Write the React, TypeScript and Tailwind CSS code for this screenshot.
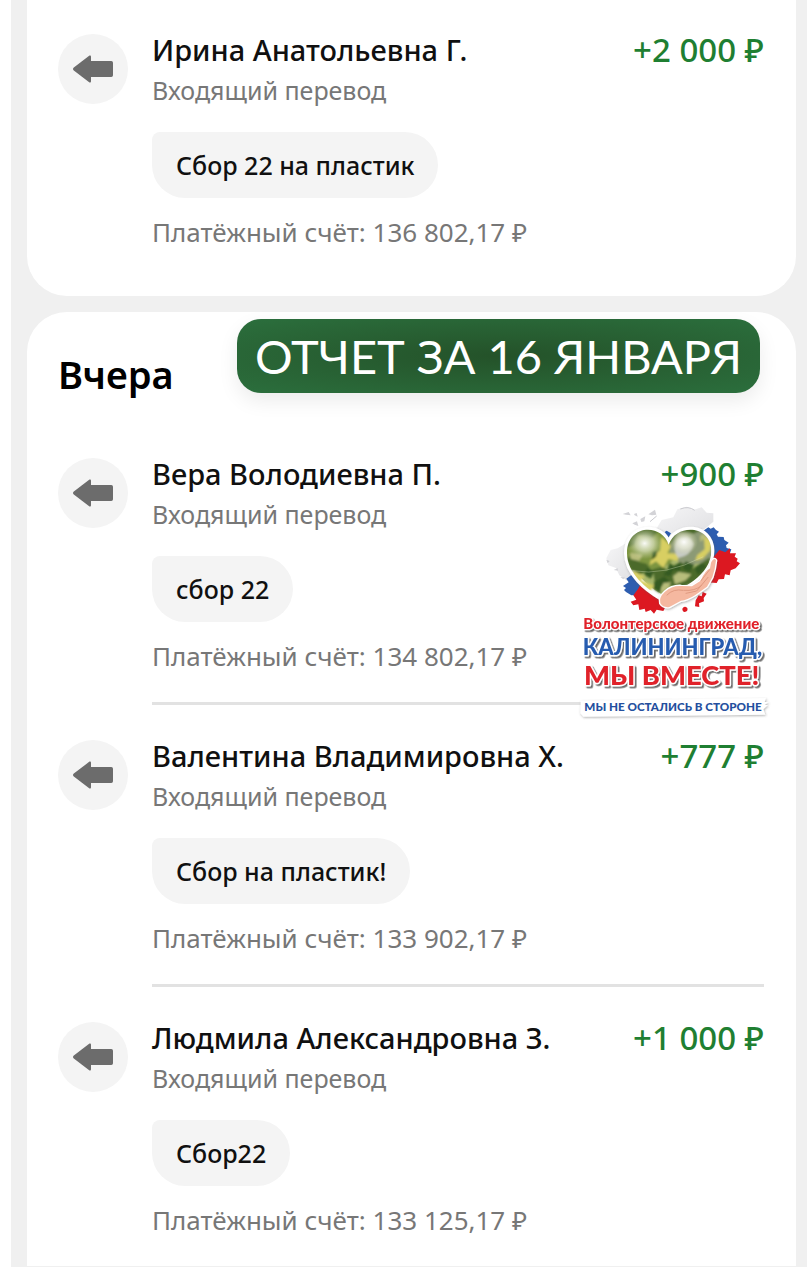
type Transfer = {
  name: string;
  amount: string;
  message: string;
  balance: string;
};

const today: Transfer[] = [
  { name: "Ирина Анатольевна Г.", amount: "+2 000 ₽", message: "Сбор 22 на пластик", balance: "136 802,17 ₽" },
];

const yesterday: Transfer[] = [
  { name: "Вера Володиевна П.", amount: "+900 ₽", message: "сбор 22", balance: "134 802,17 ₽" },
  { name: "Валентина Владимировна Х.", amount: "+777 ₽", message: "Сбор на пластик!", balance: "133 902,17 ₽" },
  { name: "Людмила Александровна З.", amount: "+1 000 ₽", message: "Сбор22", balance: "133 125,17 ₽" },
];

function IncomingIcon() {
  return (
    <span className="mt-1 flex size-[70px] shrink-0 items-center justify-center rounded-full bg-[#f4f4f4]">
      <svg className="h-7 w-10" viewBox="0 0 40 28" fill="#6c6c6c" aria-hidden="true">
        <path d="M16.5 .6Q18 0 18 1.700V6H38.300Q40 6 40 7.700V20.300Q40 22 38.300 22H18V26.300Q18 28 16.500 27.400L.8 15.500Q-.8 14 .8 12.500Z" />
      </svg>
    </span>
  );
}

function TransferRow({ item, divided }: { item: Transfer; divided: boolean }) {
  return (
    <li className="flex gap-6">
      <IncomingIcon />
      <div className="min-w-0 flex-1">
        <div className="flex items-center justify-between gap-4">
          <h3 className="text-[29px] leading-10 font-medium text-[#101010]">{item.name}</h3>
          <span className="text-[33px] leading-10 font-medium whitespace-nowrap text-[#1f7f32]">{item.amount}</span>
        </div>
        <p className="mt-0.5 text-[25px] leading-9 text-[#777777]">Входящий перевод</p>
        <p className="mt-6 w-fit rounded-[33px] rounded-tl-lg bg-[#f4f4f4] px-6 text-[25px] leading-[66px] font-medium text-[#101010]">
          {item.message}
        </p>
        <p className="mt-4 text-[26px] leading-9 text-[#777777]">Платёжный счёт: {item.balance}</p>
        {divided && <hr className="mt-7 mb-[31px] h-[3px] border-0 bg-[#e2e2e2]" />}
      </div>
    </li>
  );
}

function TransferList({ items }: { items: Transfer[] }) {
  return (
    <ul>
      {items.map((item, i) => (
        <TransferRow key={item.name} item={item} divided={i < items.length - 1} />
      ))}
    </ul>
  );
}

function VolunteerLogo() {
  return (
    <svg
      className="absolute top-[188px] right-4 h-[220px] w-[210px]"
      viewBox="0 0 630 660"
      role="img"
      aria-label="Волонтерское движение Калининград, мы вместе!"
    >
      <defs>
        <clipPath id="heart">
          <path d="M296 134C276 70 171 72 171 160C171 220 230 267 273 292C335 270 424 225 424 152C424 75 319 68 296 134Z" />
        </clipPath>
        <radialGradient id="shine">
          <stop offset="0" stopColor="#ffffff" stopOpacity="0.95" />
          <stop offset="0.5" stopColor="#eef0d8" stopOpacity="0.6" />
          <stop offset="1" stopColor="#cdd3a0" stopOpacity="0" />
        </radialGradient>
        <linearGradient id="cloud" x1="0" y1="0" x2="1" y2="1">
          <stop offset="0" stopColor="#f6f6f7" />
          <stop offset="1" stopColor="#dedee1" />
        </linearGradient>
        <filter id="blend">
          <feGaussianBlur stdDeviation="3" />
        </filter>
        <filter id="soft" x="-20%" y="-20%" width="140%" height="140%">
          <feDropShadow dx="2" dy="3" stdDeviation="3" floodColor="#555" floodOpacity="0.45" />
        </filter>
        <filter id="letters" x="-5%" y="-20%" width="110%" height="150%">
          <feDropShadow dx="5" dy="5" stdDeviation="1" floodColor="#444" floodOpacity="0.8" />
        </filter>
      </defs>
      <g fill="url(#cloud)">
        <path d="M258 88L275 60L310 52L322 28L350 20L372 29L395 22L410 38L430 40L430 65L405 86L370 96L330 94L297 120Z" />
        <path d="M168 130L143 145L122 150L109 174L115 196L138 204L148 226L174 244L205 230L190 150Z" />
      </g>
      <path fill="#d3d3d7" d="M158 42L176 36L182 46L168 44ZM192 42L200 39L203 50L194 46ZM187 70L201 64L205 78L194 74ZM211 57L226 49L223 64L214 66ZM235 43L255 29L259 44L246 46ZM131 210L143 205L144 212ZM151 231L165 232L160 238ZM109 179L119 183L113 190Z" />
      <path d="M331 27Q356 17 374 31M240 65L260 48" fill="none" stroke="#c9c9ce" strokeWidth="3" />
      <path fill="#2d5daf" d="M400 92L415 82L422 86L431 82L438 90L447 95L440 103L444 110L461 111L463 120L476 128L468 136L470 144L484 148L477 168L430 175ZM188 222L169 236L176 247L159 258L168 264L162 270L168 276L184 286L205 285L226 265L206 225ZM284 96L296 112L303 100L290 92Z" />
      <path fill="#dc1821" d="M428 174L448 150L466 157L480 145L480 160L498 160L494 170L503 176L500 184L510 190L497 205L482 211L479 226L465 223L462 237L446 238L440 249L412 247ZM204 267L190 286L199 299L182 305L190 316L205 313L208 330L224 326L227 336L242 330L252 341L260 329L280 333L287 320L310 305L273 277L220 238Z" />
      <path fill="#dc1821" d="M377 301L386 286L395 289L398 276L410 281L401 294L402 304L387 310L388 321L375 319ZM337 326Q343 315 352 324Q355 335 344 336Q337 335 337 326Z" />
      <path
        d="M296 134C276 70 171 72 171 160C171 220 230 267 273 292C335 270 424 225 424 152C424 75 319 68 296 134Z"
        fill="#a7b66c"
        stroke="#fff"
        strokeWidth="18"
        filter="url(#soft)"
      />
      <g clipPath="url(#heart)">
        <g filter="url(#blend)">
          <path fill="#7d9540" d="M150 60H310V180L260 220L150 210Z" />
          <path fill="#8c9a74" d="M302 60H440V178L340 200L300 160Z" />
          <path fill="#4c6b2b" d="M180 95L225 80L265 94L246 115L205 105L195 134L165 145ZM165 176L196 163L208 186L230 191L245 212L210 222L184 211ZM299 90Q340 65 390 92L370 101L325 96L304 133ZM248 208L280 199L294 216L330 185L370 205L420 172V230L330 265L255 249Z" />
          <path fill="#d8cf62" d="M274 110L303 139L292 160L330 161L322 183L295 177L280 204L258 184L239 196L245 165L270 152ZM402 108L426 123L420 152L398 176L375 182L382 165L404 148ZM191 214L225 230L212 241L255 257L239 274L180 232Z" />
          <path fill="#355a22" d="M247 154L263 152L258 170L244 181ZM298 188L311 197L333 186L331 212L310 211L300 229L279 225L293 208ZM230 203L252 212L243 236L223 225ZM346 184L373 194L358 216L338 207ZM374 205L395 188L410 199L384 226ZM253 245L282 230L300 244L274 259L270 280L250 266Z" />
          <path fill="#b8bd7c" d="M180 158L218 164L207 183L182 177ZM309 229L326 216L364 223L347 241L315 253ZM391 105L410 101L404 116L390 125ZM280 249L304 247L287 272L273 273Z" />
          <path fill="#c7cbc4" d="M322 121Q355 98 371 132Q362 168 325 174Q304 148 322 121Z" />
        </g>
        <ellipse cx="224" cy="130" rx="55" ry="48" fill="url(#shine)" />
        <ellipse cx="342" cy="126" rx="42" ry="38" fill="url(#shine)" />
        <path d="M185 212Q285 230 400 170" fill="none" stroke="#e0e7c2" strokeWidth="3" opacity=".35" />
      </g>
      <path
        fill="#f5b8a0"
        stroke="#fff"
        strokeWidth="8"
        strokeLinejoin="round"
        paintOrder="stroke"
        filter="url(#soft)"
        d="M271 310Q266 292 285 275Q306 256 334 258L366 259L392 242Q405 212 420 205L423 188Q432 171 438 181Q436 205 427 232L411 260L376 285Q351 301 333 302L298 321Q280 324 271 310Z"
      />
      <path d="M291 285Q310 265 339 271M342 271Q375 274 394 257M348 280L380 273L414 232M393 242L419 209" fill="none" stroke="#e09a80" strokeWidth="3" strokeLinecap="round" />
      <g className="font-['Lato',sans-serif] font-black" strokeLinejoin="round" paintOrder="stroke" stroke="#fff">
        <text x="40" y="387" fontSize="45" fill="#e02129" strokeWidth="8" filter="url(#letters)">Волонтерское движение</text>
        <text x="38" y="465" fontSize="66" fill="#285baf" strokeWidth="9" filter="url(#letters)">КАЛИНИНГРАД,</text>
        <text x="42" y="555" fontSize="82" fill="#e02129" strokeWidth="9" filter="url(#letters)">МЫ ВМЕСТЕ!</text>
      </g>
      <path d="M32 602L588 594L584 606H596L584 615H594L580 628L586 644L40 650L31 640Z" fill="#fff" filter="url(#soft)" />
      <text x="43" y="632" fontSize="35" fill="#244f9e" className="font-['Lato',sans-serif] font-black">МЫ НЕ ОСТАЛИСЬ В СТОРОНЕ</text>
    </svg>
  );
}

export default function App() {
  return (
    <main className="bg-white pb-[13px] pl-[11px] font-['Noto_Sans',sans-serif]">
      <div className="flex flex-col gap-4 bg-[#f0f0f0] pr-[11px] pb-px pl-4">
        <section className="rounded-b-[40px] bg-white pt-[30px] pr-8 pb-[46px] pl-[31px]">
          <TransferList items={today} />
        </section>
        <section className="relative rounded-t-[40px] bg-white pt-[7px] pr-8 pb-7 pl-[31px]">
          <header className="flex items-start justify-between">
            <h2 className="pt-[30px] text-[38px] leading-[50px] font-semibold text-black">Вчера</h2>
            <p className="mr-1 rounded-3xl bg-[#2a6a3a] bg-radial from-[#245229] to-[#2b6f3d] px-[18px] font-['Lato',sans-serif] text-[47px] leading-[74px] whitespace-nowrap text-white shadow-[0_8px_20px_rgba(0,0,0,0.08)]">
              ОТЧЕТ ЗА 16 ЯНВАРЯ
            </p>
          </header>
          <div className="pt-[55px]">
            <TransferList items={yesterday} />
          </div>
          <VolunteerLogo />
        </section>
      </div>
    </main>
  );
}
